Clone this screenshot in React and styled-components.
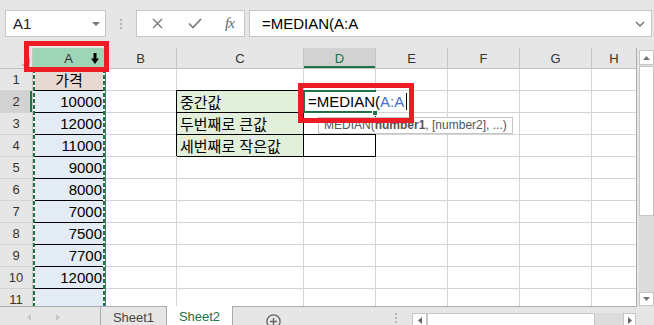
import React from "react";
import styled, { createGlobalStyle } from "styled-components";

const GlobalStyle = createGlobalStyle`
  html, body {
    margin: 0;
    padding: 0;
    background: #e6e6e6;
  }
  body {
    font-family: "Liberation Sans", "Noto Sans CJK KR", sans-serif;
  }
`;

const Window = styled.div`
  width: 654px;
  height: 325px;
  overflow: hidden;
  background: #e6e6e6;
  display: flex;
  flex-direction: column;
`;

/* ---------- formula bar ---------- */

const FormulaRow = styled.div`
  height: 48px;
  flex: none;
  box-sizing: border-box;
  padding: 10px 2px 0 5px;
  display: flex;
  align-items: flex-start;
`;

const Field = styled.div`
  height: 27px;
  box-sizing: border-box;
  background: #fff;
  border: 1px solid #c6c6c6;
  display: flex;
  align-items: center;
  font-size: 15px;
  color: #222;
`;

const NameBox = styled(Field)`
  width: 101px;
  padding: 0 5px 0 7px;
  justify-content: space-between;
`;

const Grip = styled.div`
  width: 2px;
  height: ${({ $h }) => $h || 10}px;
  margin: ${({ $m }) => $m};
  background: repeating-linear-gradient(to bottom, #b4b4b4 0 2px, transparent 2px 4px);
`;

const FxBox = styled(Field)`
  width: 109px;
  display: grid;
  grid-template-columns: 40px 36px 33px;
  justify-items: center;
`;

const FxLabel = styled.span`
  font-family: "Liberation Serif", serif;
  font-style: italic;
  font-size: 15px;
  color: #666;
  letter-spacing: -1px;
`;

const FormulaInput = styled(Field)`
  flex: 1;
  margin-left: 4px;
  padding: 0 6px 0 12px;
  justify-content: space-between;
  color: #000;
`;

/* ---------- grid ---------- */

const Main = styled.div`
  display: flex;
  height: 259px;
  flex: none;
`;

const Sheet = styled.div`
  width: 637px;
  box-sizing: border-box;
  border-right: 1px solid #ababab;
  border-bottom: 1px solid #ababab;
  background: #fff;
  display: flex;
  flex-direction: column;
`;

const HeaderRow = styled.div`
  display: flex;
  height: 21px;
  flex: none;
`;

const Corner = styled.div`
  width: 33px;
  flex: none;
  box-sizing: border-box;
  background: #e6e6e6;
  border-right: 1px solid #c6c6c6;
  border-bottom: 1px solid #bfbfbf;
  display: flex;
  align-items: flex-end;
  justify-content: flex-end;
  padding: 0 2px 2px 0;
`;

const ColHead = styled.div`
  position: ${({ $anchor }) => ($anchor ? "relative" : "static")};
  width: ${({ $w }) => $w}px;
  flex: none;
  box-sizing: border-box;
  background: ${({ $state }) =>
    $state === "selected" ? "#9fd5b7" : $state === "active" ? "#d2d2d2" : "#e6e6e6"};
  border-right: 1px solid #c6c6c6;
  border-bottom: 1px solid #bfbfbf;
  box-shadow: ${({ $state }) => ($state === "active" ? "inset 0 -2px 0 #217346" : "none")};
  display: grid;
  grid-template-columns: 1fr auto 1fr;
  align-items: center;
  font-size: 13px;
  color: ${({ $state }) => ($state === "active" ? "#217346" : "#333")};
  &:last-child {
    border-right: none;
  }
`;

const HeadLabel = styled.span`
  grid-column: 2;
`;

const HeadIcon = styled.span`
  grid-column: 3;
  justify-self: end;
  margin-right: 5px;
  display: flex;
`;

const Body = styled.div`
  position: relative;
  flex: 1;
  overflow: hidden;
`;

const Row = styled.div`
  display: flex;
  height: 22px;
  flex: none;
`;

const RowHead = styled.div`
  width: 33px;
  flex: none;
  box-sizing: border-box;
  background: ${({ $active }) => ($active ? "#d2d2d2" : "#e6e6e6")};
  border-right: 1px solid #c6c6c6;
  border-bottom: 1px solid #d4d4d4;
  box-shadow: ${({ $active }) => ($active ? "inset -2px 0 0 #217346" : "none")};
  display: flex;
  align-items: center;
  justify-content: center;
  font-size: 13px;
  color: #333;
`;

const Cell = styled.div`
  position: ${({ $anchor }) => ($anchor ? "relative" : "static")};
  width: ${({ $w }) => $w}px;
  flex: none;
  box-sizing: border-box;
  padding: 0 2px 0 3px;
  display: flex;
  align-items: center;
  justify-content: ${({ $align }) => $align || "flex-start"};
  background: ${({ $bg }) => $bg || "transparent"};
  border-right: 1px solid ${({ $box }) => ($box ? "#000" : "#d4d4d4")};
  border-bottom: 1px solid ${({ $box, $under }) => ($box || $under ? "#000" : "#d4d4d4")};
  box-shadow: ${({ $box }) => ($box ? "-1px -1px 0 #000" : "none")};
  font-size: 15px;
  color: #000;
  white-space: nowrap;
  &:last-child {
    border-right: none;
  }
`;

const Marquee = styled.div`
  position: absolute;
  z-index: 1;
  top: 0;
  bottom: 0;
  left: 33px;
  width: 72px;
  pointer-events: none;
  background:
    repeating-linear-gradient(to bottom, #217346 0 4px, #fff 4px 6px) left top / 2px 100% no-repeat,
    repeating-linear-gradient(to bottom, #217346 0 4px, #fff 4px 6px) right top / 2px 100% no-repeat;
  box-shadow: 1px 0 0 #4472c4;
`;

const Editor = styled.div`
  position: absolute;
  z-index: 2;
  left: 0;
  top: 0;
  bottom: 1px;
  width: 108px;
  padding-left: 4px;
  box-sizing: border-box;
  background: #fff;
  display: flex;
  align-items: center;
  font-size: 15px;
  color: #000;
  white-space: nowrap;
`;

const RefText = styled.span`
  color: #4472c4;
`;

const Caret = styled.span`
  width: 1px;
  height: 17px;
  margin-left: 2px;
  background: #000;
`;

const ActiveFrame = styled.div`
  position: absolute;
  z-index: 2;
  left: -1px;
  top: -1px;
  width: 73px;
  height: 23px;
  box-sizing: border-box;
  border: 2px solid #217346;
  border-right: none;
  pointer-events: none;
`;

const FillHandle = styled.div`
  position: absolute;
  z-index: 3;
  left: 68px;
  top: 19px;
  width: 6px;
  height: 6px;
  box-sizing: border-box;
  background: #217346;
  border: 1px solid #fff;
`;

const Tip = styled.div`
  position: absolute;
  z-index: 3;
  left: 14px;
  top: 26px;
  height: 17px;
  box-sizing: border-box;
  padding: 0 5px;
  background: #fff;
  border: 1px solid #c6c6c6;
  font-size: 12px;
  line-height: 15px;
  color: #555;
  white-space: nowrap;
`;

const RedBox = styled.div`
  position: absolute;
  z-index: 4;
  left: ${({ $x }) => $x}px;
  top: ${({ $y }) => $y}px;
  width: ${({ $w }) => $w}px;
  height: ${({ $h }) => $h}px;
  box-sizing: border-box;
  border: 5px solid #ed1c24;
  pointer-events: none;
`;

/* ---------- scrollbars & tabs ---------- */

const VScroll = styled.div`
  width: 15px;
  height: 256px;
  margin: 2px 0 0 2px;
  display: flex;
  flex-direction: column;
  background: #dcdcdc;
`;

const ScrollBtn = styled.div`
  flex: none;
  width: ${({ $w }) => ($w ? `${$w}px` : "auto")};
  height: ${({ $h }) => ($h ? `${$h}px` : "auto")};
  box-sizing: border-box;
  background: #fff;
  border: 1px solid #c6c6c6;
  display: flex;
  align-items: center;
  justify-content: center;
`;

const Thumb = styled.div`
  flex: none;
  box-sizing: border-box;
  background: #fff;
  border: 1px solid #c6c6c6;
  ${({ $vertical }) => ($vertical ? "height: 150px; margin-top: 1px;" : "width: 168px;")}
`;

const Track = styled.div`
  flex: 1;
`;

const TabBar = styled.div`
  height: 18px;
  flex: none;
  display: flex;
  font-size: 13px;
`;

const TabNav = styled.div`
  width: 100px;
  flex: none;
  display: flex;
  align-items: center;
  gap: 25px;
  padding: 2px 0 0 27px;
  box-sizing: border-box;
`;

const SheetTab = styled.div`
  width: ${({ $w }) => $w}px;
  flex: none;
  box-sizing: border-box;
  margin-top: ${({ $active }) => ($active ? "-1px" : "0")};
  background: ${({ $active }) => ($active ? "#fff" : "transparent")};
  border-left: ${({ $active }) => ($active ? "none" : "1px solid #ababab")};
  border-right: 1px solid #ababab;
  color: ${({ $active }) => ($active ? "#217346" : "#444")};
  display: flex;
  align-items: center;
  justify-content: center;
  padding-top: 2px;
`;

const AddSheet = styled.div`
  margin: 7px 0 0 33px;
  display: flex;
`;

const Spacer = styled.div`
  flex: 1;
`;

const HScroll = styled.div`
  width: 224px;
  height: 14px;
  margin: 6px 18px 0 0;
  display: flex;
  background: #dcdcdc;
`;

const Tri = ({ dir, color = "#777" }) => {
  const pts = {
    up: "0,4 7,4 3.5,0",
    down: "0,0 7,0 3.5,4",
    left: "4,0 4,7 0,3.5",
    right: "0,0 0,7 4,3.5",
  }[dir];
  const vertical = dir === "up" || dir === "down";
  return (
    <svg width={vertical ? 7 : 4} height={vertical ? 4 : 7}>
      <polygon points={pts} fill={color} />
    </svg>
  );
};

const cols = [
  { key: "A", w: 72 },
  { key: "B", w: 72 },
  { key: "C", w: 127 },
  { key: "D", w: 72 },
  { key: "E", w: 72 },
  { key: "F", w: 72 },
  { key: "G", w: 72 },
  { key: "H", w: 44 },
];

const prices = ["가격", 10000, 12000, 11000, 9000, 8000, 7000, 7500, 7700, 12000, ""];
const labels = { 2: "중간값", 3: "두번째로 큰값", 4: "세번째로 작은값" };

function renderCell(col, r) {
  const k = `${col.key}${r}`;
  if (col.key === "A") {
    return (
      <Cell
        key={k}
        $w={col.w}
        $bg={r === 1 ? "#e8d8d2" : "#e3ebf5"}
        $align={r === 1 ? "center" : "flex-end"}
        $under={r <= 10}
      >
        {prices[r - 1]}
      </Cell>
    );
  }
  if (col.key === "C" && labels[r]) {
    return (
      <Cell key={k} $w={col.w} $bg="#e2efda" $box>
        {labels[r]}
      </Cell>
    );
  }
  if (col.key === "D" && r === 2) {
    return (
      <Cell key={k} $w={col.w} $box $anchor>
        <Editor>
          =MEDIAN(<RefText>A:A</RefText>
          <Caret />
        </Editor>
        <ActiveFrame />
        <FillHandle />
        <Tip>
          MEDIAN(<b>number1</b>, [number2], ...)
        </Tip>
        <RedBox $x={-6} $y={-8} $w={116} $h={40} />
      </Cell>
    );
  }
  if (col.key === "D" && (r === 3 || r === 4)) {
    return <Cell key={k} $w={col.w} $box />;
  }
  return <Cell key={k} $w={col.w} />;
}

export default function App() {
  const rows = Array.from({ length: 11 }, (_, i) => i + 1);

  return (
    <Window>
      <GlobalStyle />
      <FormulaRow>
        <NameBox>
          A1
          <svg width="8" height="4">
            <polygon points="0,0 8,0 4,4" fill="#777" />
          </svg>
        </NameBox>
        <Grip $m="9px 14px 0 14px" />
        <FxBox>
          <svg width="11" height="11">
            <path d="M1 1L10 10M10 1L1 10" stroke="#7a7a7a" strokeWidth="1.4" />
          </svg>
          <svg width="14" height="11">
            <polyline points="1,5.5 5,9.5 13,1" fill="none" stroke="#7a7a7a" strokeWidth="1.7" />
          </svg>
          <FxLabel>fx</FxLabel>
        </FxBox>
        <FormulaInput>
          =MEDIAN(A:A
          <svg width="10" height="6">
            <polyline points="1,1 5,5 9,1" fill="none" stroke="#777" strokeWidth="1.5" />
          </svg>
        </FormulaInput>
      </FormulaRow>

      <Main>
        <Sheet>
          <HeaderRow>
            <Corner>
              <svg width="9" height="9">
                <polygon points="9,0 9,9 0,9" fill="#b5b5b5" />
              </svg>
            </Corner>
            {cols.map((c) => (
              <ColHead
                key={c.key}
                $w={c.w}
                $anchor={c.key === "A"}
                $state={c.key === "A" ? "selected" : c.key === "D" ? "active" : undefined}
              >
                <HeadLabel>{c.key}</HeadLabel>
                {c.key === "A" && (
                  <>
                    <HeadIcon>
                      <svg width="8" height="11">
                        <path d="M2.5 0h3v5.5h2.5L4 11 0 5.5h2.5z" fill="#000" />
                      </svg>
                    </HeadIcon>
                    <RedBox $x={-9} $y={-7} $w={85} $h={31} />
                  </>
                )}
              </ColHead>
            ))}
          </HeaderRow>
          <Body>
            {rows.map((r) => (
              <Row key={r}>
                <RowHead $active={r === 2}>{r}</RowHead>
                {cols.map((c) => renderCell(c, r))}
              </Row>
            ))}
            <Marquee />
          </Body>
        </Sheet>
        <VScroll>
          <ScrollBtn $h={15}>
            <Tri dir="up" />
          </ScrollBtn>
          <Thumb $vertical />
          <Track />
          <ScrollBtn $h={14}>
            <Tri dir="down" />
          </ScrollBtn>
        </VScroll>
      </Main>

      <TabBar>
        <TabNav>
          <Tri dir="left" color="#c4c4c4" />
          <Tri dir="right" color="#c4c4c4" />
        </TabNav>
        <SheetTab $w={67}>Sheet1</SheetTab>
        <SheetTab $w={66} $active>
          Sheet2
        </SheetTab>
        <AddSheet>
          <svg width="15" height="15">
            <circle cx="7.5" cy="7.5" r="6.6" fill="none" stroke="#666" strokeWidth="1.3" />
            <path d="M7.5 4v7M4 7.5h7" stroke="#666" strokeWidth="1.4" />
          </svg>
        </AddSheet>
        <Spacer />
        <Grip $h={12} $m="6px 15px 0 0" />
        <HScroll>
          <ScrollBtn $w={15}>
            <Tri dir="left" color="#666" />
          </ScrollBtn>
          <Thumb />
          <Track />
          <ScrollBtn $w={13}>
            <Tri dir="right" color="#666" />
          </ScrollBtn>
        </HScroll>
      </TabBar>
    </Window>
  );
}
